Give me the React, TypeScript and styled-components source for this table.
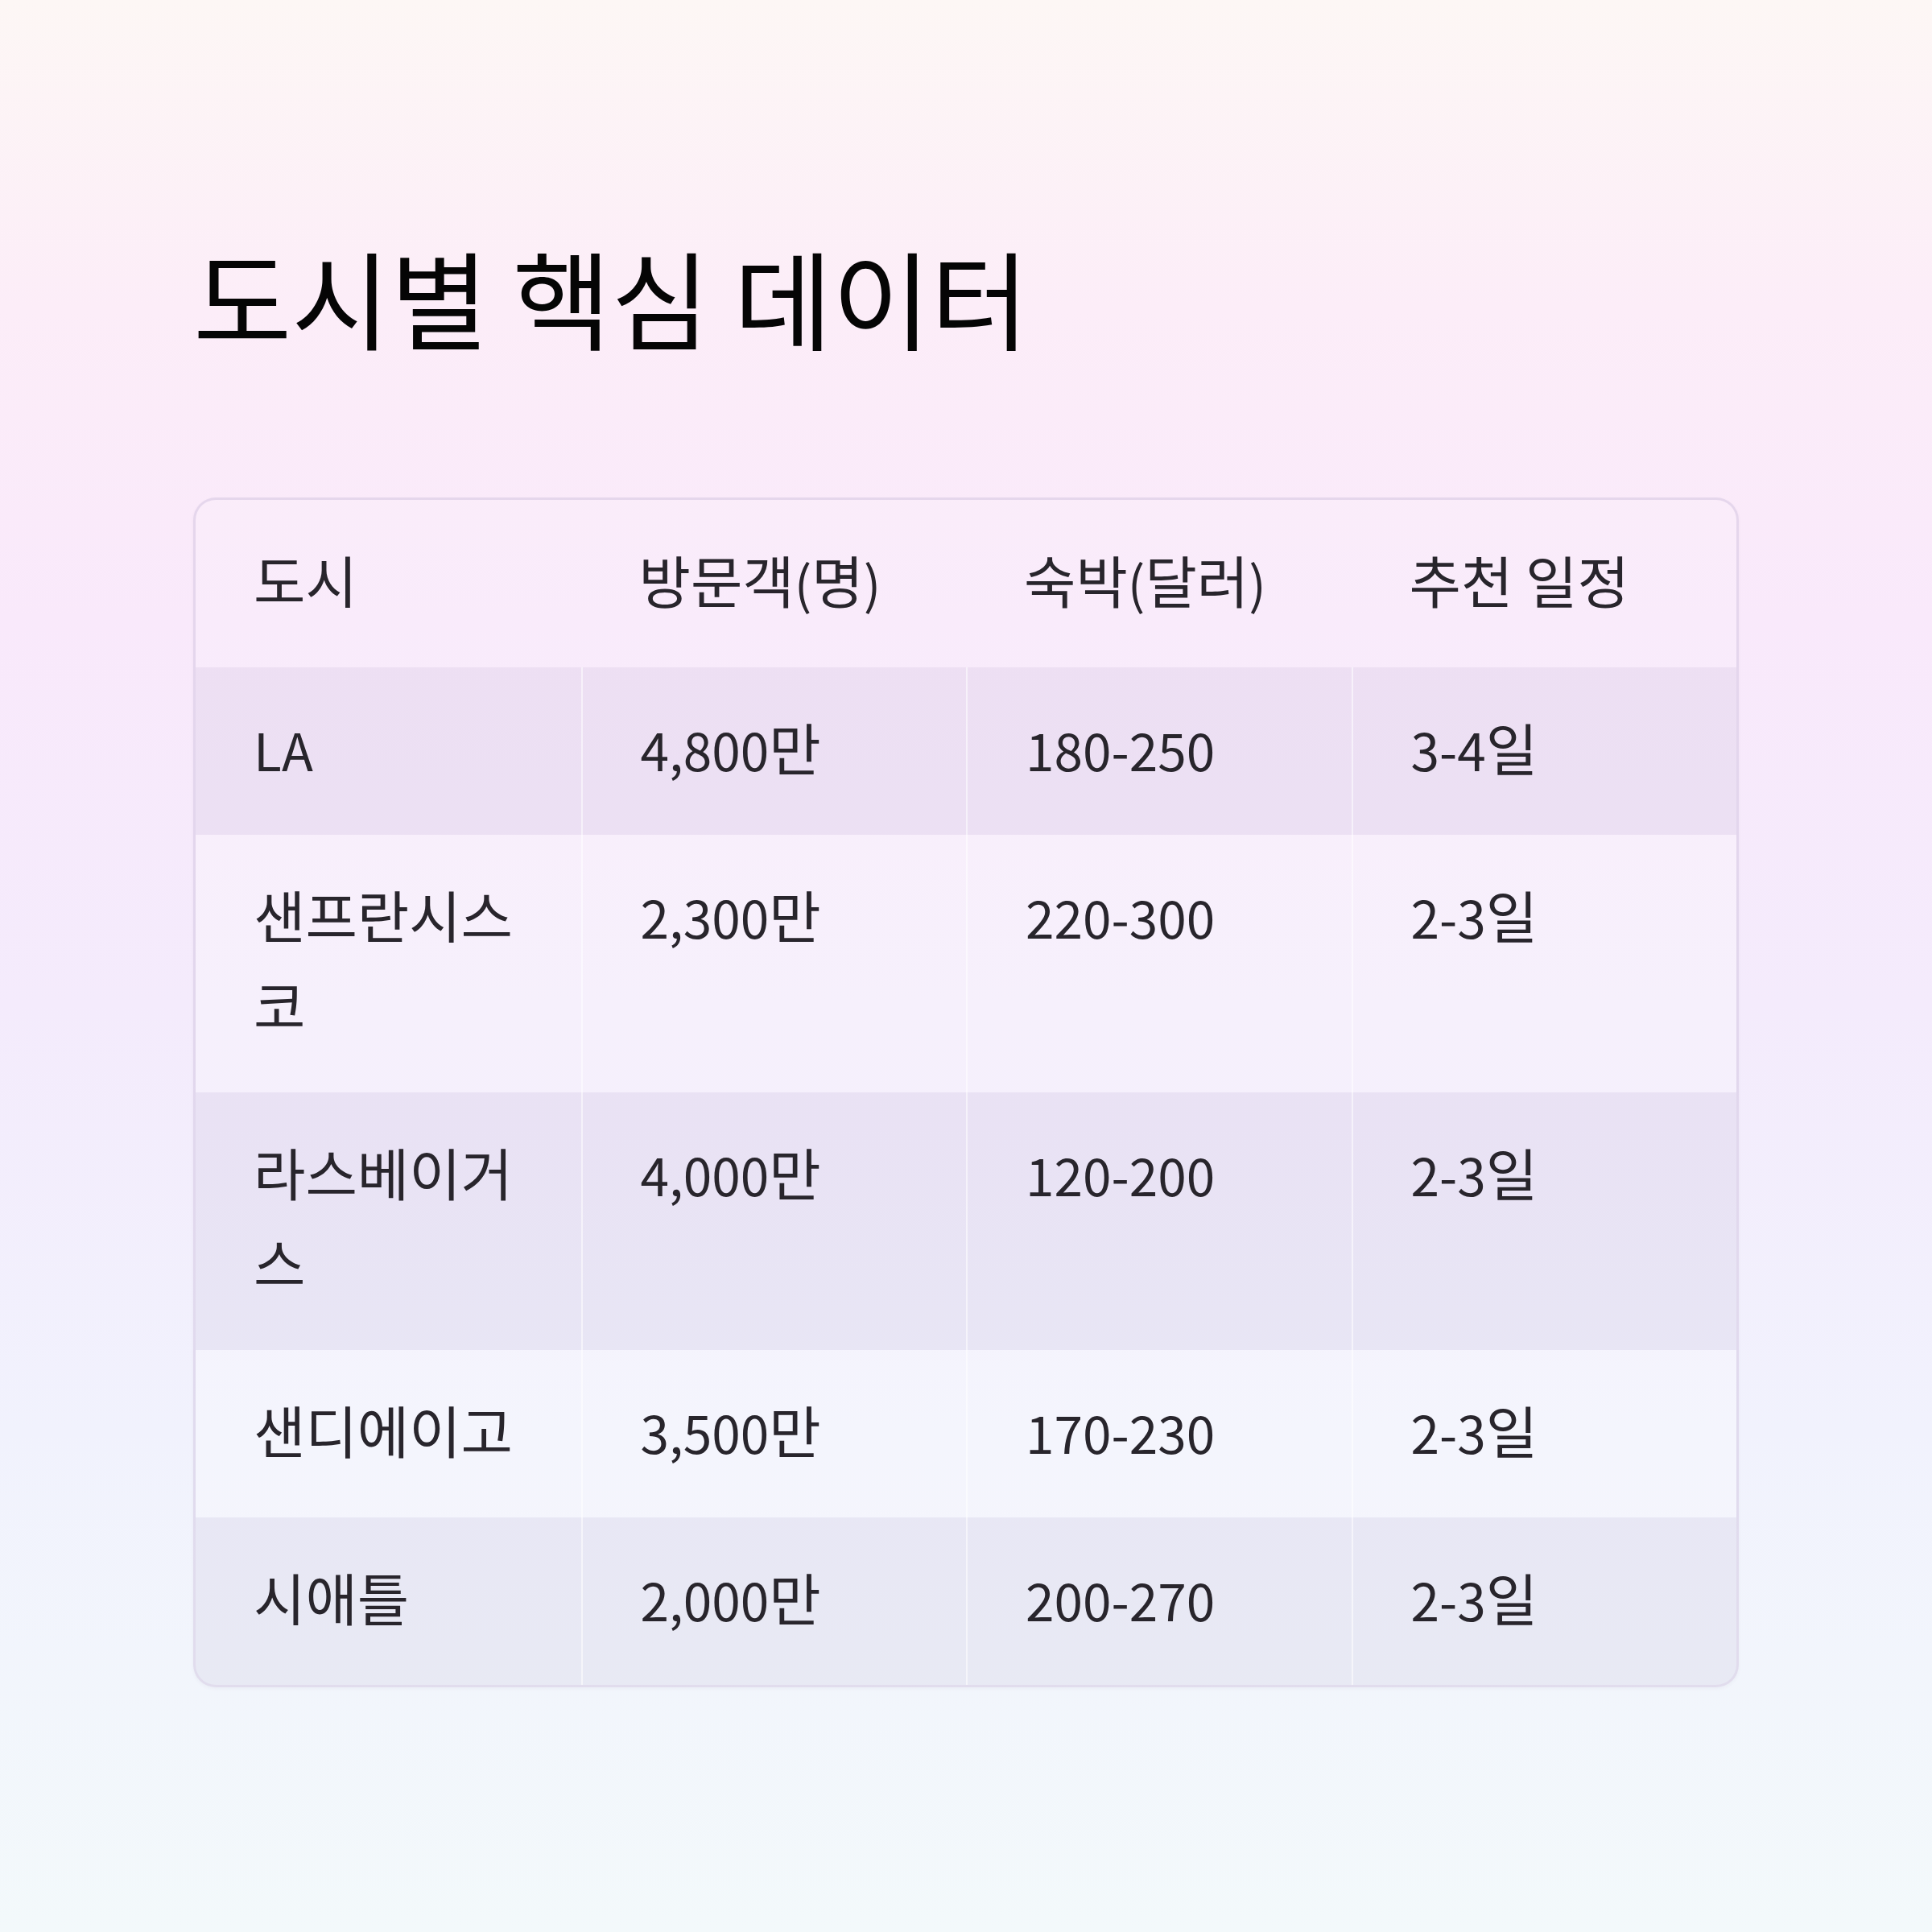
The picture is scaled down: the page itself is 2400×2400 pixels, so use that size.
import { Fragment } from 'react'
import styled, { createGlobalStyle } from 'styled-components'

const GlobalStyle = createGlobalStyle`
  html, body {
    margin: 0;
    padding: 0;
  }
  body {
    font-family: "Noto Sans CJK KR", "Noto Sans", sans-serif;
  }
`

const headers = ['도시', '방문객(명)', '숙박(달러)', '추천 일정']

const rows = [
  { city: 'LA', visitors: '4,800만', stay: '180-250', days: '3-4일' },
  { city: '샌프란시스코', visitors: '2,300만', stay: '220-300', days: '2-3일' },
  { city: '라스베이거스', visitors: '4,000만', stay: '120-200', days: '2-3일' },
  { city: '샌디에이고', visitors: '3,500만', stay: '170-230', days: '2-3일' },
  { city: '시애틀', visitors: '2,000만', stay: '200-270', days: '2-3일' },
]

const HANGUL = /([\uAC00-\uD7A3\u3130-\u318F\s]+)/

// hangul sits a touch larger than the latin/digits in this design
const Mixed = ({ text }: { text: string }) => (
  <>
    {text.split(HANGUL).map((part, i) =>
      part === '' ? null : i % 2 === 1 ? (
        <Fragment key={i}>{part}</Fragment>
      ) : (
        <Latin key={i}>{part}</Latin>
      ),
    )}
  </>
)

export default function App() {
  return (
    <>
      <GlobalStyle />
      <Page>
        <Title>
          <Mixed text="도시별 핵심 데이터" />
        </Title>
        <Card>
          <Row>
            {headers.map((h) => (
              <HeadCell key={h}>
                <Mixed text={h} />
              </HeadCell>
            ))}
          </Row>
          {rows.map((r, i) => (
            <Row key={r.city} $tone={i % 2 === 0 ? 'dark' : 'light'}>
              <Cell>
                <Mixed text={r.city} />
              </Cell>
              <Cell $divider>
                <Mixed text={r.visitors} />
              </Cell>
              <Cell $divider>
                <Mixed text={r.stay} />
              </Cell>
              <Cell $divider>
                <Mixed text={r.days} />
              </Cell>
            </Row>
          ))}
        </Card>
      </Page>
    </>
  )
}

const Page = styled.div`
  width: 2400px;
  height: 2400px;
  box-sizing: border-box;
  padding: 287px 240px 0;
  display: flex;
  flex-direction: column;
  background: linear-gradient(
    180deg,
    #fdf7f5 0%,
    #fcedf8 16%,
    #f9e9fb 32%,
    #f4ebfc 52%,
    #f1f2fd 74%,
    #f3f9fb 100%
  );
`

const Title = styled.h1`
  margin: 0 0 171px;
  font-size: 133px;
  line-height: 160px;
  font-weight: 400;
  color: #050505;
`

const Latin = styled.span`
  font-size: 0.914em;
  line-height: 1;
`

const Card = styled.div`
  display: flex;
  flex-direction: column;
  border: 3px solid rgba(195, 180, 212, 0.38);
  border-radius: 28px;
  overflow: hidden;
  background: rgba(255, 255, 255, 0.1);
  box-shadow: 0 2px 4px rgba(90, 80, 120, 0.05);
`

const Row = styled.div<{ $tone?: 'dark' | 'light' }>`
  display: grid;
  grid-template-columns: repeat(4, 1fr);
  background: ${(p) =>
    p.$tone === 'dark'
      ? 'rgba(110, 85, 150, 0.075)'
      : p.$tone === 'light'
        ? 'rgba(255, 255, 255, 0.16)'
        : 'transparent'};
`

const HeadCell = styled.div`
  padding: 43px 72px 53px;
  font-size: 70px;
  line-height: 112px;
  font-weight: 400;
  color: #28252c;
`

const Cell = styled.div<{ $divider?: boolean }>`
  padding: 43px 72px 53px;
  font-size: 70px;
  line-height: 112px;
  color: #28252c;
  border-left: ${(p) => (p.$divider ? '2px solid rgba(255, 255, 255, 0.55)' : 'none')};
  word-break: keep-all;
  overflow-wrap: anywhere;
`
